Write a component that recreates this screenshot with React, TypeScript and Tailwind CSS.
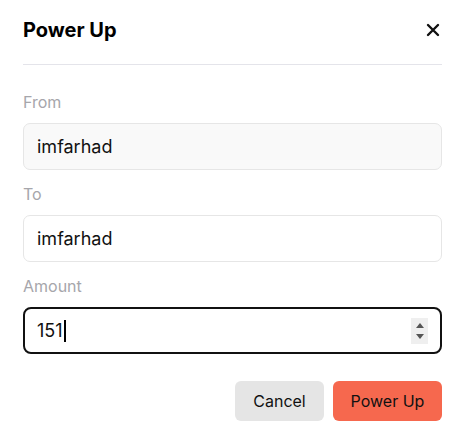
import React from "react";

export default function App() {
  const font = { fontFamily: "Inter, 'Noto Sans', sans-serif" };
  return (
    <div className="w-[462px] h-[435px] bg-white text-[#111111]" style={font}>
      <div className="pl-[23px] pr-[20px]">
        <div className="flex items-center justify-between h-[28px] mt-[16px]">
          <h1 className="text-[20px] font-bold leading-[28px] text-black">Power Up</h1>
          <svg width="14" height="14" viewBox="0 0 14 14" className="mr-[2px]">
            <path d="M2 2 L12 12 M12 2 L2 12" stroke="#111" strokeWidth="2.4" strokeLinecap="round" />
          </svg>
        </div>
        <div className="h-px bg-[#e4e4ea] mt-[20px]" />
        <div className="mt-[25px] text-[16px] leading-[24px] text-[#a6a6ab]">From</div>
        <div className="mt-[9px] h-[47px] rounded-[7px] border border-[#e6e6e6] bg-[#f9f9f9] flex items-center pl-[13px] text-[18px]">
          imfarhad
        </div>
        <div className="mt-[12px] text-[16px] leading-[24px] text-[#a6a6ab]">To</div>
        <div className="mt-[9px] h-[47px] rounded-[7px] border border-[#e6e6e6] bg-white flex items-center pl-[13px] text-[18px]">
          imfarhad
        </div>
        <div className="mt-[12px] text-[16px] leading-[24px] text-[#a6a6ab]">Amount</div>
        <div className="mt-[9px] h-[47px] rounded-[8px] border-2 border-[#111111] bg-white flex items-center pl-[12px] pr-[12px] text-[18px]">
          <span>151</span>
          <span className="inline-block w-[2px] h-[22px] bg-black ml-[1px]" />
          <div className="ml-auto w-[17px] h-[26px] bg-[#efefef] flex flex-col items-center justify-center gap-[6px]">
            <svg width="8" height="5" viewBox="0 0 8 5"><path d="M0 5 L4 0 L8 5 Z" fill="#555" /></svg>
            <svg width="8" height="5" viewBox="0 0 8 5"><path d="M0 0 L8 0 L4 5 Z" fill="#555" /></svg>
          </div>
        </div>
        <div className="mt-[27px] flex justify-end gap-[9px]">
          <button className="h-[40px] w-[89px] rounded-[6px] bg-[#e5e5e5] text-[16px] font-normal text-[#111]">Cancel</button>
          <button className="h-[40px] w-[109px] rounded-[6px] bg-[#f6684e] text-[16px] font-normal text-[#111]">Power Up</button>
        </div>
      </div>
    </div>
  );
}
